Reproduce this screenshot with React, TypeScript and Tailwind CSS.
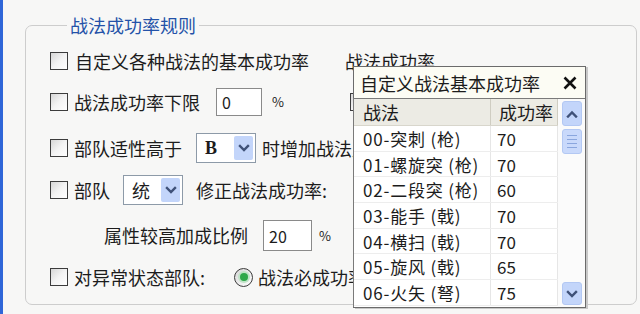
import React from "react";

const FONT = { fontFamily: '"Noto Sans CJK SC", "Noto Sans", sans-serif' };

function Check() {
  return (
    <div className="w-[18px] h-[18px] shrink-0 border border-[#3c3c3c] bg-linear-to-br from-[#d6d6d6] via-[#f3f3f3] to-white" />
  );
}

function Chevron({ up = false, color = "#3f5178" }: { up?: boolean; color?: string }) {
  return (
    <svg width="12" height="8" viewBox="0 0 12 8">
      <path
        d={up ? "M2 6.5 L6 2.5 L10 6.5" : "M2 2 L6 6 L10 2"}
        fill="none"
        stroke={color}
        strokeWidth="2.4"
        strokeLinecap="square"
      />
    </svg>
  );
}

function Select({ value, bold = false }: { value: string; bold?: boolean }) {
  return (
    <div className="flex items-center w-[60px] h-[30px] border border-[#8d9aa8] bg-white p-[2px] shrink-0">
      <div
        className={`flex-1 pl-[6px] text-[18px] leading-none ${bold ? "font-bold" : ""}`}
        style={bold ? { fontFamily: '"Liberation Serif", "DejaVu Serif", serif' } : undefined}
      >
        {value}
      </div>
      <div className="w-[19px] h-[24px] bg-[#c3d5fa] flex items-center justify-center rounded-[2px]">
        <Chevron />
      </div>
    </div>
  );
}

function Input({ value, w, h }: { value: string; w: string; h: string }) {
  return (
    <div className={`${w} ${h} shrink-0 border border-[#8a8a8a] bg-white flex items-center pl-[5px] text-[16px]`}>
      {value}
    </div>
  );
}

const rows: [string, string][] = [
  ["00-突刺 (枪)", "70"],
  ["01-螺旋突 (枪)", "70"],
  ["02-二段突 (枪)", "60"],
  ["03-能手 (戟)", "70"],
  ["04-横扫 (戟)", "70"],
  ["05-旋风 (戟)", "65"],
  ["06-火矢 (弩)", "75"],
];

export default function App() {
  return (
    <div className="relative flex w-[640px] h-[314px] overflow-hidden bg-[#f7f7f6] text-[#1c1c1c]" style={FONT}>
      <div className="w-[3px] shrink-0 bg-[#2f66d8]" />
      <div className="flex-1 pl-[22px] pt-[12px] pr-[3px]">
        <fieldset className="h-[293px] border border-[#cdcdcd] rounded-[7px] pl-[24px]">
          <legend className="ml-[17px] px-[3px] text-[18px] leading-[26px] text-[#2452a8]">战法成功率规则</legend>

          <div className="flex items-center h-[30px] mt-[8px] text-[18px]">
            <Check />
            <span className="ml-[7px]">自定义各种战法的基本成功率</span>
            <span className="ml-[36px]">战法成功率</span>
          </div>

          <div className="flex items-center h-[30px] mt-[11px] text-[18px]">
            <Check />
            <span className="ml-[6px]">战法成功率下限</span>
            <div className="ml-[16px]">
              <Input value="0" w="w-[46px]" h="h-[28px]" />
            </div>
            <span className="ml-[10px] text-[13px]">%</span>
            <div className="ml-[66px]">
              <Check />
            </div>
          </div>

          <div className="flex items-center h-[30px] mt-[16px] text-[18px]">
            <Check />
            <span className="ml-[6px]">部队适性高于</span>
            <div className="ml-[14px]">
              <Select value="B" bold />
            </div>
            <span className="ml-[6px] whitespace-nowrap">时增加战法成功率</span>
          </div>

          <div className="flex items-center h-[30px] mt-[12px] text-[18px]">
            <Check />
            <span className="ml-[6px]">部队</span>
            <div className="ml-[13px]">
              <Select value="统" />
            </div>
            <span className="ml-[13px] whitespace-nowrap">修正战法成功率:</span>
          </div>

          <div className="flex items-center h-[31px] mt-[15px] text-[18px]">
            <span className="ml-[54px]">属性较高加成比例</span>
            <div className="ml-[15px]">
              <Input value="20" w="w-[49px]" h="h-[31px]" />
            </div>
            <span className="ml-[7px] text-[13px]">%</span>
          </div>

          <div className="flex items-center h-[30px] mt-[11px] text-[18px]">
            <Check />
            <span className="ml-[6px]">对异常状态部队:</span>
            <div className="ml-[29px] w-[19px] h-[19px] rounded-full border border-[#3c3c3c] bg-linear-to-br from-[#d6d6d6] to-white flex items-center justify-center">
              <div className="w-[8px] h-[8px] rounded-full bg-[#2fa84a] ring-2 ring-[#bfe3c6]" />
            </div>
            <span className="ml-[5px] whitespace-nowrap">战法必成功率</span>
          </div>
        </fieldset>
      </div>

      {/* popup */}
      <div className="absolute left-[353px] top-[66px] w-[233px] h-[242px] border border-[#6b6b6b] bg-white flex flex-col shadow-[2px_1px_0_#c8c8c8]">
        <div className="h-[31px] shrink-0 bg-[#fcfcf4] flex items-center pl-[6px] pr-[8px]">
          <span className="text-[18px] leading-none">自定义战法基本成功率</span>
          <div className="ml-auto">
            <svg width="14" height="14" viewBox="0 0 14 14">
              <path d="M1.5 1.5 L12.5 12.5 M12.5 1.5 L1.5 12.5" stroke="#111" strokeWidth="2.6" />
            </svg>
          </div>
        </div>
        <div className="flex flex-1 border-t border-l border-[#7a7a7a] ml-[-1px] bg-white">
          <div className="flex flex-col w-[204px]">
            <div className="flex h-[27px] shrink-0 bg-[#ecebe4] border-b border-[#d8d6cc] text-[18px] leading-none">
              <div className="w-[137px] pl-[9px] flex items-center border-r border-[#cfcdc2]">战法</div>
              <div className="flex-1 pl-[8px] flex items-center border-r border-[#cfcdc2]">成功率</div>
            </div>
            {rows.map(([name, v]) => (
              <div key={name} className="flex h-[25.7px] shrink-0 border-b border-[#ededed] text-[17px] leading-none">
                <div className="w-[137px] pl-[9px] flex items-center border-r border-[#e6e6e6] whitespace-nowrap tracking-[0.8px]">{name}</div>
                <div className="flex-1 pl-[6px] flex items-center border-r border-[#e6e6e6]">{v}</div>
              </div>
            ))}
          </div>
          <div className="flex-1 flex flex-col items-center pt-[2px] pb-[2px] bg-[#fbfbfb]">
            <div className="w-[20px] h-[25px] rounded-[3px] bg-[#c3d5fa] border border-[#b3c8f3] flex items-center justify-center">
              <Chevron up />
            </div>
            <div className="mt-[3px] w-[20px] h-[25px] rounded-[3px] bg-[#c9d9fb] border border-[#b3c8f3] flex flex-col items-center justify-center gap-[3px]">
              <div className="w-[10px] h-px bg-[#8aa6de]" />
              <div className="w-[10px] h-px bg-[#8aa6de]" />
              <div className="w-[10px] h-px bg-[#8aa6de]" />
              <div className="w-[10px] h-px bg-[#8aa6de]" />
            </div>
            <div className="mt-auto w-[20px] h-[23px] rounded-[3px] bg-[#c3d5fa] border border-[#b3c8f3] flex items-center justify-center">
              <Chevron />
            </div>
          </div>
        </div>
      </div>
    </div>
  );
}
